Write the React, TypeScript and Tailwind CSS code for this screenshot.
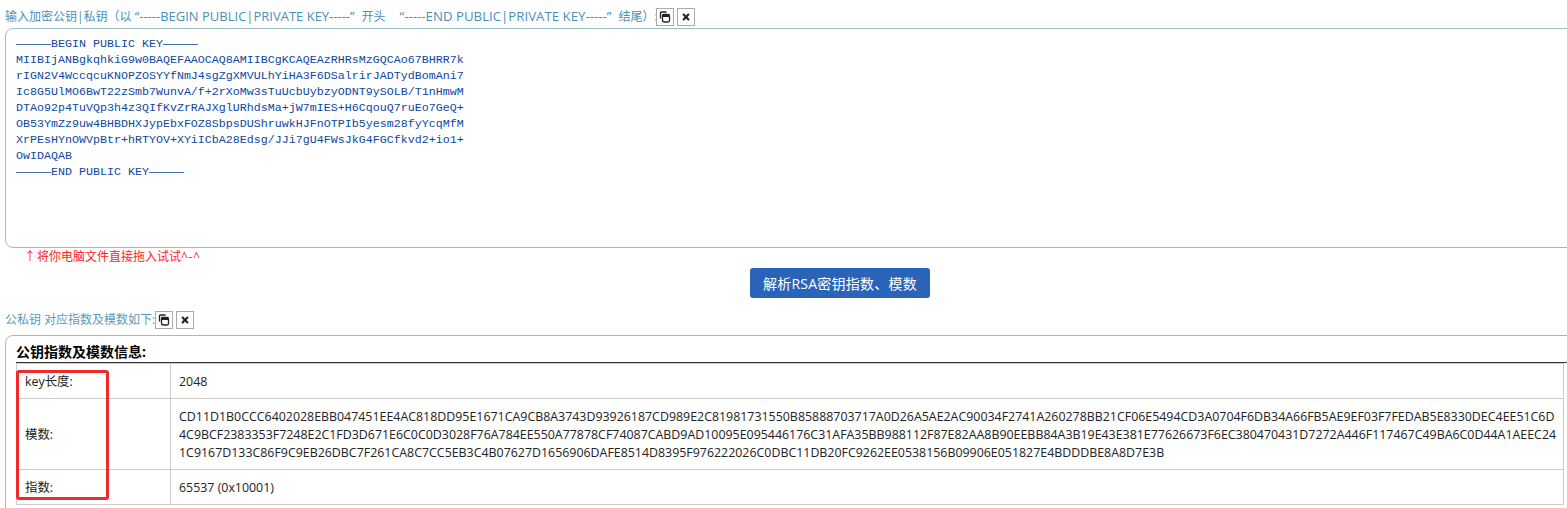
import React from 'react';

const keyText = `—————BEGIN PUBLIC KEY—————
MIIBIjANBgkqhkiG9w0BAQEFAAOCAQ8AMIIBCgKCAQEAzRHRsMzGQCAo67BHRR7k
rIGN2V4WccqcuKNOPZOSYYfNmJ4sgZgXMVULhYiHA3F6DSalrirJADTydBomAni7
Ic8G5UlMO6BwT22zSmb7WunvA/f+2rXoMw3sTuUcbUybzyODNT9ySOLB/T1nHmwM
DTAo92p4TuVQp3h4z3QIfKvZrRAJXglURhdsMa+jW7mIES+H6CqouQ7ruEo7GeQ+
OB53YmZz9uw4BHBDHXJypEbxFOZ8SbpsDUShruwkHJFnOTPIb5yesm28fyYcqMfM
XrPEsHYnOWVpBtr+hRTYOV+XYiICbA28Edsg/JJi7gU4FWsJkG4FGCfkvd2+io1+
OwIDAQAB
—————END PUBLIC KEY—————`;

const modulus = [
  'CD11D1B0CCC6402028EBB047451EE4AC818DD95E1671CA9CB8A3743D93926187CD989E2C81981731550B85888703717A0D26A5AE2AC90034F2741A260278BB21CF06E5494CD3A0704F6DB34A66FB5AE9EF03F7FEDAB5E8330DEC4EE51C6D',
  '4C9BCF2383353F7248E2C1FD3D671E6C0C0D3028F76A784EE550A77878CF74087CABD9AD10095E095446176C31AFA35BB988112F87E82AA8B90EEBB84A3B19E43E381E77626673F6EC380470431D7272A446F117467C49BA6C0D44A1AEEC24',
  '1C9167D133C86F9C9EB26DBC7F261CA8C7CC5EB3C4B07627D1656906DAFE8514D8395F976222026C0DBC11DB20FC9262EE0538156B09906E051827E4BDDDBE8A8D7E3B',
];

function ToolButtons() {
  return (
    <span className="flex gap-[3px]">
      <button className="flex h-[18px] w-[18px] items-center justify-center border border-[#aaaaaa] bg-white">
        <svg viewBox="0 0 12 12" className="h-[12px] w-[12px]">
          <path d="M1.5 7.5V2a1 1 0 0 1 1-1h5" fill="none" stroke="#222" strokeWidth="1.3" />
          <path d="M3.5 4.5a1 1 0 0 1 1-1h4.5a1.5 1.5 0 0 1 1.5 1.5v4.5a1.5 1.5 0 0 1-1.5 1.5h-3.5a2 2 0 0 1-2-2z" fill="#fff" stroke="#222" strokeWidth="1.3" />
          <rect x="3.5" y="3.5" width="7" height="2.5" fill="#222" />
        </svg>
      </button>
      <button className="flex h-[18px] w-[18px] items-center justify-center border border-[#aaaaaa] bg-white">
        <svg viewBox="0 0 10 10" className="h-[8px] w-[8px]">
          <path d="M2 2l6 6M8 2l-6 6" stroke="#222" strokeWidth="2.6" strokeLinecap="round" />
        </svg>
      </button>
    </span>
  );
}

export default function App() {
  return (
    <div className="h-[508px] w-[1567px] overflow-hidden bg-white font-['Open_Sans','Noto_Sans_CJK_SC',sans-serif] text-[12px] text-[#222222]">
      <div className="flex h-[28px] items-center pl-[5px] pt-[6px] text-[#4a90b8]">
        <span className="w-[651px] whitespace-nowrap">
          输入加密公钥|私钥（以 <span className="text-[13px]">“-----BEGIN PUBLIC|PRIVATE KEY-----”</span>
          <span className="ml-[7px]">开头</span>
          <span className="ml-[14px] text-[13.25px]">“-----END PUBLIC|PRIVATE KEY-----”</span>
          <span className="ml-[7px]">结尾）:</span>
        </span>
        <ToolButtons />
      </div>

      <textarea
        readOnly
        defaultValue={keyText}
        className="ml-[5px] block h-[220px] w-[1580px] resize-none overflow-hidden rounded-[8px] border border-[#9dbcc6] px-[10px] pb-[3px] pt-[7px] font-['Liberation_Mono',monospace] text-[11.67px] leading-[16px] text-[#0d47a1] outline-none"
      />

      <p className="ml-[24px] h-[18px] leading-[18px] text-[#ff2222]">
        <span className="mr-[1px]">↑</span>将你电脑文件直接拖入试试<span className="tracking-[0.6px]">^-^</span>
      </p>

      <div className="mt-[2px] flex justify-center pl-[113px]">
        <button className="h-[30px] w-[180px] rounded-[3px] bg-[#2a64b8] text-[14px] tracking-[0.25px] text-white">解析RSA密钥指数、模数</button>
      </div>

      <div className="mt-[12px] flex h-[20px] items-center pl-[5px] text-[#5c99bf]">
        <span>公私钥 对应指数及模数如下:</span>
        <ToolButtons />
      </div>

      <div className="ml-[5px] mt-[5px] h-[180px] w-[1580px] rounded-[8px] border border-[#9dbcc6] pl-[10px] pt-[6px]">
        <h3 className="h-[21px] border-b border-[#333333] text-[14px] font-bold leading-[20px] text-black">公钥指数及模数信息:</h3>
        <div className="relative w-[1549px]">
          <table className="w-[1548px] table-fixed border-collapse text-[12.4px]">
            <colgroup>
              <col className="w-[154px]" />
              <col />
            </colgroup>
            <tbody>
              <tr className="h-[35px]">
                <td className="border border-[#cccccc] pl-[8px] pt-[2px]">key长度:</td>
                <td className="border border-[#cccccc] pl-[8px] pt-[2px]">2048</td>
              </tr>
              <tr className="h-[71px]">
                <td className="border border-[#cccccc] pl-[8px] pt-[2px]">模数:</td>
                <td className="whitespace-nowrap border border-[#cccccc] pl-[8px] pt-[2px] leading-[18px]">
                  {modulus.map((line) => (
                    <div key={line}>{line}</div>
                  ))}
                </td>
              </tr>
              <tr className="h-[35px]">
                <td className="border border-[#cccccc] pl-[8px] pt-[2px]">指数:</td>
                <td className="border border-[#cccccc] pl-[8px] pt-[2px]">65537 (0x10001)</td>
              </tr>
            </tbody>
          </table>
          <div className="absolute left-0 top-[7px] h-[130px] w-[93px] rounded-[3px] border-[3px] border-[#f02a2a]" />
        </div>
      </div>
    </div>
  );
}
